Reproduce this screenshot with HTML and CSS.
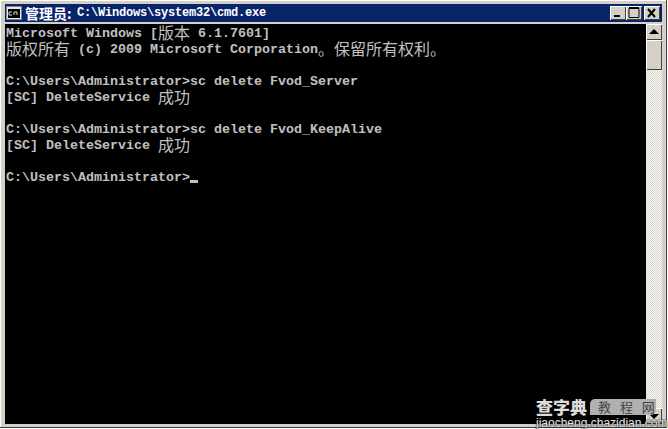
FILE: index.html
```html
<!DOCTYPE html>
<html lang="zh-CN">
<head>
<meta charset="utf-8">
<title>cmd</title>
<link rel="stylesheet" href="styles.css">
</head>
<body>
<div class="window">
  <div class="titlebar">
    <svg class="appicon" width="16" height="14" viewBox="0 0 16 14"><rect x="0.5" y="0.5" width="15" height="13" fill="#e8e8e8" stroke="#808080"/><rect x="2" y="3" width="12" height="9" fill="#000"/><path d="M6 6H3v3h3M8 9V6h3v3" stroke="#ddd" fill="none"/></svg>
    <span class="title"><span class="cjk">管理员:</span><span class="path">C:\Windows\system32\cmd.exe</span></span>
    <div class="caption">
      <button class="capbtn"><svg width="16" height="14" viewBox="0 0 16 14"><rect x="4" y="9" width="6" height="2" fill="#000"/></svg></button>
      <button class="capbtn"><svg width="16" height="14" viewBox="0 0 16 14"><path d="M3 2.5h10v9H3z M3 1.5h10" stroke="#000" fill="none"/></svg></button>
      <button class="capbtn close"><svg width="16" height="14" viewBox="0 0 16 14"><path d="M4 3l7 8M11 3l-7 8" stroke="#000" stroke-width="2" fill="none"/></svg></button>
    </div>
  </div>
  <div class="client">
    <div class="console">
      <div class="line">Microsoft Windows [<span class="zh">版本</span> 6.1.7601]</div>
      <div class="line"><span class="zh">版权所有</span> (c) 2009 Microsoft Corporation<span class="zh">。保留所有权利。</span></div>
      <div class="line"></div>
      <div class="line">C:\Users\Administrator&gt;sc delete Fvod_Server</div>
      <div class="line">[SC] DeleteService <span class="zh">成功</span></div>
      <div class="line"></div>
      <div class="line">C:\Users\Administrator&gt;sc delete Fvod_KeepAlive</div>
      <div class="line">[SC] DeleteService <span class="zh">成功</span></div>
      <div class="line"></div>
      <div class="line">C:\Users\Administrator&gt;<span class="cursor"></span></div>
    </div>
    <div class="scrollbar">
      <button class="arrow"><svg width="16" height="16" viewBox="0 0 16 16"><path d="M8 5l5 5H3z" fill="#000"/></svg></button>
      <div class="thumb"></div>
      <div class="track"></div>
      <button class="arrow"><svg width="16" height="16" viewBox="0 0 16 16"><path d="M8 11L3 6h10z" fill="#000"/></svg></button>
    </div>
  </div>
</div>
<div class="watermark">
  <div class="wm-top"><span class="wm-brand">查字典</span><span class="wm-tag">教 程 网</span></div>
  <div class="wm-url">jiaocheng.chazidian.com</div>
</div>
</body>
</html>
```
FILE: styles.css
```css
html, body { margin: 0; padding: 0; }
body { width: 668px; height: 429px; position: relative; overflow: hidden; background: #fff; font-family: "Liberation Mono", monospace; }
.window { width: 667px; height: 428px; background: #d4d0c8; border-right: 1px solid #404040; border-bottom: 1px solid #404040; padding: 4px 4px 3px 5px; box-sizing: border-box; display: flex; flex-direction: column; box-shadow: inset 1px 1px 0 #fff; }
.titlebar { height: 18px; margin-bottom: 2px; background: #0a246a; display: flex; align-items: center; padding: 0 2px 0 1px; flex: none; }
.appicon { flex: none; margin-right: 3px; }
.title { color: #fff; display: flex; align-items: center; white-space: pre; }
.title .cjk { font: bold 14px/18px "Noto Sans CJK SC", sans-serif; width: 52px; }
.path { font: bold 12px/18px "Liberation Mono", monospace; letter-spacing: -0.2px; }
.caption { margin-left: auto; display: flex; }
.capbtn { width: 16px; height: 14px; padding: 0; border: 0; background: #d4d0c8; box-shadow: inset 1px 1px 0 #fff, inset -1px -1px 0 #404040; display: block; }
.capbtn svg { display: block; }
.close { margin-left: 2px; }
.client { flex: 1; display: flex; min-height: 0; }
.console { flex: 1; padding: 2px 0 0 1px; background: #000; color: #c0c0c0; font: bold 13.33px/16px "Liberation Mono", monospace; overflow: hidden; }
.line { height: 16px; line-height: 16px; white-space: pre; }
.zh { display: inline-block; height: 16px; overflow: visible; font: 400 16px/13px "Noto Sans CJK SC", sans-serif; vertical-align: top; }
.cursor { display: inline-block; width: 8px; height: 3px; background: #c0c0c0; vertical-align: -2px; }
.scrollbar { width: 16px; display: flex; flex-direction: column; flex: none; }
.arrow { width: 16px; height: 16px; padding: 0; border: 0; background: #d4d0c8; box-shadow: inset 1px 1px 0 #fff, inset -1px -1px 0 #404040; flex: none; }
.arrow svg { display: block; }
.thumb { height: 30px; flex: none; background: #d4d0c8; box-shadow: inset 1px 1px 0 #fff, inset -1px -1px 0 #404040; }
.track { flex: 1; background: repeating-conic-gradient(#fff 0 25%, #d4d0c8 0 50%) 0 0 / 2px 2px; }
.watermark { position: absolute; left: 536px; top: 397px; width: 132px; color: #e8e8e8; }
.wm-top { display: flex; align-items: center; gap: 3px; }
.wm-brand { font: 900 17px/20px "Noto Sans CJK SC", sans-serif; color: #dcdcdc; }
.wm-tag { font: 400 13px/16px "Noto Sans CJK SC", sans-serif; background: #b0b0b0; color: #444; border-radius: 5px 0 5px 0; padding: 0 0 0 8px; letter-spacing: 3px; white-space: pre; width: 66px; box-sizing: border-box; }
.wm-url { font: 12px/12px "Liberation Sans", sans-serif; color: #e8e8e8; white-space: nowrap; text-shadow: 0 0 2px #000, 0 0 1px #000; }
```
